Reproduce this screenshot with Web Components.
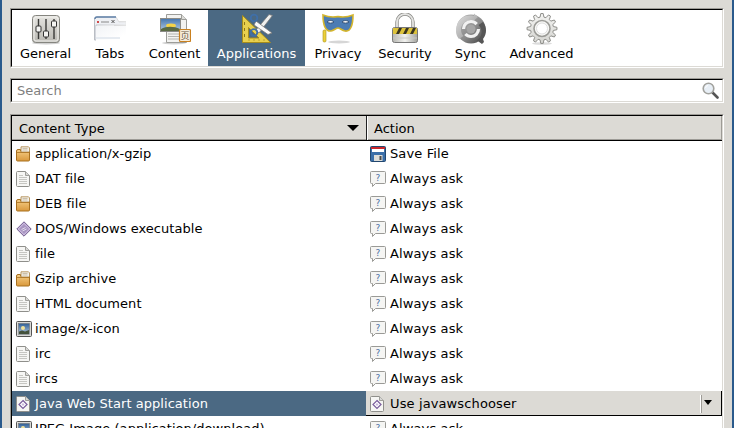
<!DOCTYPE html>
<html>
<head>
<meta charset="utf-8">
<title>Preferences</title>
<style>
    html, body { margin: 0; padding: 0; height: 100%; overflow: hidden; background: #dcdad5; }
    body { font: 13px "DejaVu Sans", sans-serif; color: #000; }
</style>
</head>
<body>
<pref-window>
    <sunken-frame>
        <pref-toolbar>
            <pref-tab icon="general" style="--w:67px">General</pref-tab>
            <pref-tab icon="tabs" style="--w:62px">Tabs</pref-tab>
            <pref-tab icon="content" style="--w:67px">Content</pref-tab>
            <pref-tab icon="applications" style="--w:97px" selected>Applications</pref-tab>
            <pref-tab icon="privacy" style="--w:66px">Privacy</pref-tab>
            <pref-tab icon="security" style="--w:68px">Security</pref-tab>
            <pref-tab icon="sync" style="--w:63px">Sync</pref-tab>
            <pref-tab icon="advanced" style="--w:79px">Advanced</pref-tab>
        </pref-toolbar>
    </sunken-frame>
    <sunken-frame class="gap-search">
        <search-box placeholder="Search"></search-box>
    </sunken-frame>
    <sunken-frame class="gap-list">
        <type-list>
            <type-row icon="package" action-icon="floppy" action="Save File">application/x-gzip</type-row>
            <type-row icon="doc" action-icon="ask" action="Always ask">DAT file</type-row>
            <type-row icon="package" action-icon="ask" action="Always ask">DEB file</type-row>
            <type-row icon="exec" action-icon="ask" action="Always ask">DOS/Windows executable</type-row>
            <type-row icon="doc" action-icon="ask" action="Always ask">file</type-row>
            <type-row icon="package" action-icon="ask" action="Always ask">Gzip archive</type-row>
            <type-row icon="doc" action-icon="ask" action="Always ask">HTML document</type-row>
            <type-row icon="image" action-icon="ask" action="Always ask">image/x-icon</type-row>
            <type-row icon="doc" action-icon="ask" action="Always ask">irc</type-row>
            <type-row icon="doc" action-icon="ask" action="Always ask">ircs</type-row>
            <type-row icon="java" action-icon="java" action="Use javawschooser" selected>Java Web Start application</type-row>
            <type-row icon="image" action-icon="ask" action="Always ask">JPEG Image (application/download)</type-row>
        </type-list>
    </sunken-frame>
</pref-window>

<script>
// 12 tooth gear outline round the middle of a 32 box
function gearPath(cx, cy, outer, inner) {
    const pts = [];
    for (let i = 0; i < 12; i++) {
        const a = i * Math.PI / 6;
        [[-0.17, inner], [-0.08, outer], [0.08, outer], [0.17, inner]].forEach(([d, r]) => {
            pts.push((cx + r * Math.sin(a + d)).toFixed(2) + " " + (cy - r * Math.cos(a + d)).toFixed(2));
        });
    }
    return "M" + pts.join("L") + "z";
}

const ICONS = {
    general: `<svg width="32" height="32" viewBox="0 0 32 32">
        <defs><linearGradient id="g" x1="0" y1="0" x2="0" y2="1"><stop offset="0" stop-color="#e6e5e1"/><stop offset="1" stop-color="#b9b8b2"/></linearGradient></defs>
        <ellipse cx="16" cy="30" rx="14" ry="1.5" fill="#cfcfcf"/>
        <rect x="2.5" y="2.5" width="27" height="27" rx="3" fill="url(#g)" stroke="#85857f"/>
        <rect x="4" y="4" width="24" height="24" rx="2" fill="none" stroke="#f2f1ee"/>
        <path d="M8.5 6v20M16 6v20M24 6v20" stroke="#3a3a38" stroke-width="1.4"/>
        <rect x="6" y="13" width="5" height="6" rx="1" fill="#f4f4f2" stroke="#333"/>
        <rect x="13.5" y="18" width="5" height="6" rx="1" fill="#f4f4f2" stroke="#333"/>
        <rect x="21.5" y="8" width="5" height="6" rx="1" fill="#f4f4f2" stroke="#333"/>
    </svg>`,
    tabs: `<svg width="32" height="32" viewBox="0 0 32 32">
        <defs>
            <linearGradient id="f" x1="0" y1="0" x2="1" y2="0"><stop offset="0" stop-color="#b9bdc4"/><stop offset="1" stop-color="#e8e8e8"/></linearGradient>
            <linearGradient id="p" x1="0" y1="0" x2="1" y2="1"><stop offset="0" stop-color="#f1f3f6"/><stop offset=".8" stop-color="#fff"/></linearGradient>
        </defs>
        <path d="M20 8h12v8H20z" fill="#dedede"/>
        <path d="M.5 27V6a2 2 0 0 1 2-2H22l3 5h7v3H2v15z" fill="#eef0f4" stroke="url(#f)"/>
        <path d="M1 6a2 2 0 0 1 2-2h19" fill="none" stroke="#5f80a8" stroke-width="1.4"/>
        <rect x="3" y="8" width="2" height="2" fill="#d04a4a"/>
        <path d="M7 9h8" stroke="#9a9a9a" stroke-width="1.2"/>
        <path d="M17.5 7l3 3m0-3l-3 3" stroke="#555"/>
        <rect x="2" y="13" width="30" height="14" fill="url(#p)"/>
        <path d="M2 25h24" stroke="#e6ebf1" stroke-width="2"/>
    </svg>`,
    content: `<svg width="32" height="32" viewBox="0 0 32 32">
        <defs><linearGradient id="s" x1="0" y1="0" x2="0" y2="1"><stop offset="0" stop-color="#4475ae"/><stop offset="1" stop-color="#b9cfe6"/></linearGradient></defs>
        <ellipse cx="15" cy="30" rx="12" ry="1.5" fill="#d2d2d2"/>
        <path d="M7.5 1.5h15l5 5v23h-20z" fill="#f2f2f0" stroke="#9c9c98"/>
        <path d="M22.5 1.5v5h5" fill="#dcdcd8" stroke="#9c9c98"/>
        <rect x="1.5" y="5.5" width="20" height="13" fill="url(#s)" stroke="#8a8a86"/>
        <ellipse cx="12" cy="12.5" rx="5" ry="2" fill="#f4d34a"/>
        <path d="M2 18v-2c5-3 13-3 19 0v2z" fill="#5a6a44"/>
        <path d="M9 21h12M9 23.5h11M9 26h13" stroke="#b4b4b0"/>
        <rect x="20.5" y="16.5" width="11" height="12" rx="1" fill="#f6eddd" stroke="#c9801f" stroke-width="1.2"/>
        <text x="26" y="26.4" font-size="9" text-anchor="middle" fill="#6b5a45" font-family="Noto Sans CJK SC, sans-serif">页</text>
    </svg>`,
    applications: `<svg width="32" height="32" viewBox="0 0 32 32">
        <path fill-rule="evenodd" d="M1.5 2.5L29.5 29.5H1.5zM7.5 14.5V25H18z" fill="#e8d04e" stroke="#a58c1c"/>
        <path d="M3.5 9v3M3.5 15v3M3.5 21v3M8 27.5v-1M13 27.5v-1M18 27.500v-1M23 27.5v-1" stroke="#8d7617"/>
        <path d="M14.500 17.500L28 1.500l3.500 1L18 20z" fill="#f0f0ee" stroke="#777" stroke-width=".8"/>
        <path d="M15 8L31 20l-4 1.500L13 12z" fill="#fafafa" stroke="#777" stroke-width=".8"/>
        <circle cx="13" cy="5" r="3.300" fill="none" stroke="#3f6fa8" stroke-width="1.800"/>
        <circle cx="13" cy="19.500" r="3.300" fill="none" stroke="#3f6fa8" stroke-width="1.800"/>
    </svg>`,
    privacy: `<svg width="32" height="32" viewBox="0 0 32 32">
        <ellipse cx="17" cy="29" rx="11" ry="1.500" fill="#d6d6d6"/>
        <rect x="1" y="17" width="3" height="12" rx="1.200" fill="#ecd03a" stroke="#a89020" stroke-width=".6"/>
        <path d="M1 2c5 2 10 2.500 15 1.500C21 4.500 26 4 31 2c0 9-2 17-8 16-3-.4-5-3-7-3s-4 2.600-7 3C3 18.500 1 11 1 2z" fill="#4c7cb4" stroke="#d4b52c" stroke-width="1.600"/>
        <path d="M5 9c2-2 5-2 7 0-2 1.500-5 1.500-7 0zM20 9c2-2 5-2 7 0-2 1.500-5 1.500-7 0z" fill="#f4f4f4" stroke="#28456c" stroke-width=".9"/>
    </svg>`,
    security: `<svg width="32" height="32" viewBox="0 0 32 32">
        <defs><linearGradient id="b" x1="0" y1="0" x2="1" y2="0"><stop offset="0" stop-color="#b5b5b0"/><stop offset=".5" stop-color="#f2f2ef"/><stop offset="1" stop-color="#a2a29d"/></linearGradient></defs>
        <path d="M8 15V9a8 8 0 0 1 16 0v6" fill="none" stroke="#8a8a86" stroke-width="3.400"/>
        <path d="M8 15V9a8 8 0 0 1 16 0v6" fill="none" stroke="#e4e4e2" stroke-width="1.800"/>
        <rect x="3.500" y="14.500" width="25" height="15" rx="2" fill="url(#b)" stroke="#777"/>
        <rect x="4" y="15" width="24" height="6" fill="#dcc23a"/>
        <path d="M7 21l3-6h3l-3 6zM14 21l3-6h3l-3 6zM21 21l3-6h3l-3 6z" fill="#3a3520"/>
        <path d="M4 25h24" stroke="#c9c9c5"/>
    </svg>`,
    sync: `<svg width="32" height="32" viewBox="0 0 32 32">
        <defs>
            <linearGradient id="y" x1="0" y1="0" x2="1" y2="1"><stop offset="0" stop-color="#b8b8b8"/><stop offset=".55" stop-color="#8a8a8a"/><stop offset="1" stop-color="#3e3e3e"/></linearGradient>
            <linearGradient id="z" x1="0" y1="0" x2="1" y2="1"><stop offset="0" stop-color="#e2e2e2"/><stop offset="1" stop-color="#8e8e8e"/></linearGradient>
        </defs>
        <circle cx="16" cy="16" r="14.500" fill="url(#y)"/>
        <path d="M19 .5l4 3.500-4 3.500c-7-1.500-13 3-13 9 0 3 1 5 2.500 6.500L4 26C1 22 .5 19 1.500 14 3 6 10 1 19 3z" fill="url(#z)"/>
        <path d="M27 31l-5-3.500 3-3c2.500-4 2-9-1.500-12.500l4.500-3c4 5 4 12 0 17l1 3z" fill="#565656"/>
        <circle cx="16" cy="16" r="7.500" fill="none" stroke="#f1f1f1" stroke-width="3.200" stroke-dasharray="18 5.500"/>
        <circle cx="16" cy="16" r="4.500" fill="#a6a6a6"/>
    </svg>`,
    advanced: `<svg width="32" height="32" viewBox="0 0 32 32">
        <defs><linearGradient id="a" x1="0" y1="0" x2="0" y2="1"><stop offset="0" stop-color="#f4f4f2"/><stop offset="1" stop-color="#d4d4d0"/></linearGradient></defs>
        <ellipse cx="16" cy="30.500" rx="10" ry="1.300" fill="#dcdcdc"/>
        <path d="${gearPath(16, 15.5, 15, 11.5)}" fill="url(#a)" stroke="#8e8e8a"/>
        <circle cx="16" cy="15.500" r="8" fill="#f8f8f6" stroke="#9c9c98" stroke-width="1.600"/>
        <circle cx="16" cy="15.500" r="5.500" fill="#fff" stroke="#dedede"/>
    </svg>`,

    package: `<svg width="16" height="16" viewBox="0 0 16 16">
        <defs><linearGradient id="o" x1="0" y1="0" x2="0" y2="1"><stop offset="0" stop-color="#f6cf87"/><stop offset="1" stop-color="#d9983c"/></linearGradient></defs>
        <path d="M.5 5a1.500 1.500 0 0 1 1.500-1.500h2.500v1.500h9v9a1 1 0 0 1-1 1h-11a1 1 0 0 1-1-1z" fill="url(#o)" stroke="#a8701f"/>
        <path d="M5 .8h7.500l1 1V6H5z" fill="#f4f1ea" stroke="#a8803f" stroke-width=".8"/>
        <path d="M6.500 2.500h5M6.500 4h5" stroke="#b9a98c" stroke-width=".7"/>
        <path d="M1 6.500h12" stroke="#a8701f" stroke-width=".8"/>
    </svg>`,
    doc: `<svg width="16" height="16" viewBox="0 0 16 16">
        <path d="M1.500.5h8l4 4v10a1 1 0 0 1-1 1h-11a1 1 0 0 1-1-1v-13a1 1 0 0 1 1-1z" fill="#f6f6f4" stroke="#8f8f8b"/>
        <path d="M9.500.5v4h4" fill="#d8d8d6" stroke="#9f9f9b"/>
        <path d="M3 4.500h4M3 6.500h8M3 8.500h8M3 10.500h8M3 12.500h8" stroke="#c6c6c2"/>
    </svg>`,
    exec: `<svg width="16" height="16" viewBox="0 0 16 16">
        <path d="M8 .8L15.200 8 8 15.200.8 8z" fill="#c9b8dc" stroke="#6f5a8c"/>
        <path d="M8 3L13 8 8 13 3 8z" fill="#a996c2"/>
        <path d="M5.500 8.500l4-2M6.500 10l4-2" stroke="#f0ebf5" stroke-width=".8"/>
    </svg>`,
    image: `<svg width="16" height="16" viewBox="0 0 16 16">
        <defs><linearGradient id="i" x1="0" y1="0" x2="0" y2="1"><stop offset="0" stop-color="#2f5e96"/><stop offset="1" stop-color="#b8cde0"/></linearGradient></defs>
        <rect x=".5" y=".5" width="15" height="15" rx="1" fill="#d9d9d6" stroke="#555"/>
        <rect x="2.500" y="2.500" width="11" height="11" fill="url(#i)" stroke="#6a6a68" stroke-width=".5"/>
        <circle cx="7" cy="7" r="2" fill="#f1e29a"/>
        <path d="M3 13v-2.500l3-1 3 1 4-1.500v4z" fill="#44523c"/>
    </svg>`,
    floppy: `<svg width="16" height="16" viewBox="0 0 16 16">
        <rect x=".5" y=".5" width="15" height="15" rx="1" fill="#3a6ea8" stroke="#22476f"/>
        <rect x="2" y="1" width="12" height="5" fill="#fff"/>
        <path d="M1 1h14v2H1z" fill="#c8262c"/>
        <rect x="4" y="9" width="8.500" height="6" fill="#dcdcd8"/>
        <rect x="9.500" y="10" width="2" height="4" fill="#4a4a4a"/>
    </svg>`,
    ask: `<svg width="16" height="16" viewBox="0 0 16 16">
        <path d="M1.500.5h13a1 1 0 0 1 1 1v10a1 1 0 0 1-1 1H5.500l-3 3v-3h-1a1 1 0 0 1-1-1v-10a1 1 0 0 1 1-1z" fill="#f5f5f3" stroke="#9a9a96"/>
        <text x="8" y="10" font-size="9" text-anchor="middle" fill="#4a6fa5" font-family="DejaVu Sans, sans-serif">?</text>
    </svg>`,
    java: `<svg width="16" height="16" viewBox="0 0 16 16">
        <path d="M1.500.5h8l4 4v10a1 1 0 0 1-1 1h-11a1 1 0 0 1-1-1v-13a1 1 0 0 1 1-1z" fill="#f6f6f4" stroke="#8f8f8b"/>
        <path d="M9.500.5v4h4" fill="#d8d8d6" stroke="#9f9f9b"/>
        <path d="M7 4.500L11 8.500 7 12.500 3 8.500z" fill="#fff" stroke="#7a5c9c" stroke-width="1.200"/>
        <path d="M7 7L8.500 8.500 7 10 5.500 8.500z" fill="#c9b8dc"/>
    </svg>`,
    search: `<svg width="17" height="17" viewBox="0 0 17 17">
        <path d="M10.500 10.500l5 5" stroke="#555" stroke-width="2.600" stroke-linecap="round"/>
        <circle cx="6.500" cy="6.500" r="5.300" fill="#e8eff6" stroke="#a2a29e" stroke-width="1.600"/>
        <path d="M3.500 6a3 3 0 0 1 2.500-2.500" stroke="#fff" fill="none"/>
    </svg>`
};

class PrefWindow extends HTMLElement {
    constructor() {
        super();
        this.attachShadow({ mode: "open" }).innerHTML = `
            <style>
                :host {
                    display: flex;
                    flex-direction: column;
                    height: 428px;
                    box-sizing: border-box;
                    padding: 8px 8px 0;
                    border-left: 2px solid #2a5a8c;
                    border-right: 2px solid #2a5a8c;
                    background: #dcdad5;
                    overflow: hidden;
                }
                ::slotted(.gap-search) { margin-top: 10px; }
                ::slotted(.gap-list) { margin-top: 11px; flex: 1; }
            </style>
            <slot></slot>`;
    }
}

// gtk "shadow in": grey + black on the top left, bg + white on the bottom right
class SunkenFrame extends HTMLElement {
    constructor() {
        super();
        this.attachShadow({ mode: "open" }).innerHTML = `
            <style>
                :host {
                    display: block;
                    flex: none;
                    border: 1px solid #fff;
                    border-top-color: #9d9b96;
                    border-left-color: #9d9b96;
                }
                .inner {
                    border: 1px solid #dcdad5;
                    border-top-color: #000;
                    border-left-color: #000;
                    height: 100%;
                    box-sizing: border-box;
                    background: #fff;
                }
            </style>
            <div class="inner"><slot></slot></div>`;
    }
}

class PrefIcon extends HTMLElement {
    constructor() {
        super();
        this.attachShadow({ mode: "open" });
    }
    connectedCallback() {
        this.shadowRoot.innerHTML = `
            <style>
                :host { display: block; flex: none; line-height: 0; }
            </style>
            ${ICONS[this.getAttribute("name")]}`;
    }
}

class PrefToolbar extends HTMLElement {
    constructor() {
        super();
        this.attachShadow({ mode: "open" }).innerHTML = `
            <style>
                :host { display: flex; height: 56px; }
            </style>
            <slot></slot>`;
    }
}

class PrefTab extends HTMLElement {
    constructor() {
        super();
        this.attachShadow({ mode: "open" });
    }
    connectedCallback() {
        this.shadowRoot.innerHTML = `
            <style>
                :host {
                    display: flex;
                    flex-direction: column;
                    align-items: center;
                    flex: none;
                    box-sizing: border-box;
                    width: var(--w, 64px);
                    padding-top: 3px;
                    color: #000;
                }
                :host([selected]) { background: #4b6983; color: #fff; }
                .label { margin-top: 1px; line-height: 16px; white-space: nowrap; }
            </style>
            <pref-icon name="${this.getAttribute("icon")}"></pref-icon>
            <div class="label"><slot></slot></div>`;
    }
}

class SearchBox extends HTMLElement {
    constructor() {
        super();
        this.attachShadow({ mode: "open" });
    }
    connectedCallback() {
        this.shadowRoot.innerHTML = `
            <style>
                :host {
                    display: flex;
                    align-items: center;
                    justify-content: space-between;
                    height: 21px;
                    padding: 0 3px 0 5px;
                    color: #7f7f7f;
                }
            </style>
            <span>${this.getAttribute("placeholder")}</span>
            <pref-icon name="search"></pref-icon>`;
    }
}

class TypeList extends HTMLElement {
    constructor() {
        super();
        this.attachShadow({ mode: "open" }).innerHTML = `
            <style>
                :host { display: block; }
                .head {
                    display: grid;
                    grid-template-columns: 355px 1fr;
                    height: 24px;
                    background: #dcdad5;
                    border-bottom: 1px solid #000;
                    box-shadow: inset -1px -1px 0 #9d9b96;
                }
                .cell {
                    display: flex;
                    align-items: center;
                    justify-content: space-between;
                    box-sizing: border-box;
                    padding: 0 7px;
                }
                .cell:first-child { border-right: 1px solid #222; }
                .cell:last-child { border-left: 1px solid #fff; padding-left: 6px; }
                .arrow {
                    width: 0;
                    height: 0;
                    border-left: 6px solid transparent;
                    border-right: 6px solid transparent;
                    border-top: 6px solid #000;
                }
            </style>
            <div class="head">
                <div class="cell"><span>Content Type</span><span class="arrow"></span></div>
                <div class="cell"><span>Action</span></div>
            </div>
            <slot></slot>`;
    }
}

class TypeRow extends HTMLElement {
    constructor() {
        super();
        this.attachShadow({ mode: "open" });
    }
    connectedCallback() {
        const selected = this.hasAttribute("selected");
        this.shadowRoot.innerHTML = `
            <style>
                :host {
                    display: grid;
                    grid-template-columns: 355px 1fr;
                    height: 25px;
                    color: #000;
                    white-space: nowrap;
                }
                :host([selected]) .type { background: #4b6983; color: #fff; }
                .cell {
                    display: flex;
                    align-items: center;
                    gap: 3px;
                    padding-left: 4px;
                    min-width: 0;
                    letter-spacing: .05px;
                }
                .action { padding-left: 3px; gap: 4px; position: relative; letter-spacing: .12px; }
                :host([selected]) .action {
                    margin-left: -1px;
                    padding-left: 4px;
                    background: #dcdad5;
                    box-shadow: inset -1px -1px 0 #000;
                }
                .combo {
                    position: absolute;
                    right: 10px;
                    top: 4px;
                    bottom: 3px;
                    width: 10px;
                    border-left: 1px solid #9d9b96;
                    box-shadow: -1px 0 0 #fff;
                }
                .combo::after {
                    content: "";
                    position: absolute;
                    left: 2px;
                    top: 5px;
                    border-left: 4px solid transparent;
                    border-right: 4px solid transparent;
                    border-top: 5px solid #000;
                }
            </style>
            <div class="cell type">
                <pref-icon name="${this.getAttribute("icon")}"></pref-icon>
                <span><slot></slot></span>
            </div>
            <div class="cell action">
                <pref-icon name="${this.getAttribute("action-icon")}"></pref-icon>
                <span>${this.getAttribute("action")}</span>
                ${selected ? '<span class="combo"></span>' : ""}
            </div>`;
    }
}

customElements.define("pref-icon", PrefIcon);
customElements.define("pref-window", PrefWindow);
customElements.define("sunken-frame", SunkenFrame);
customElements.define("pref-toolbar", PrefToolbar);
customElements.define("pref-tab", PrefTab);
customElements.define("search-box", SearchBox);
customElements.define("type-list", TypeList);
customElements.define("type-row", TypeRow);
</script>
</body>
</html>
